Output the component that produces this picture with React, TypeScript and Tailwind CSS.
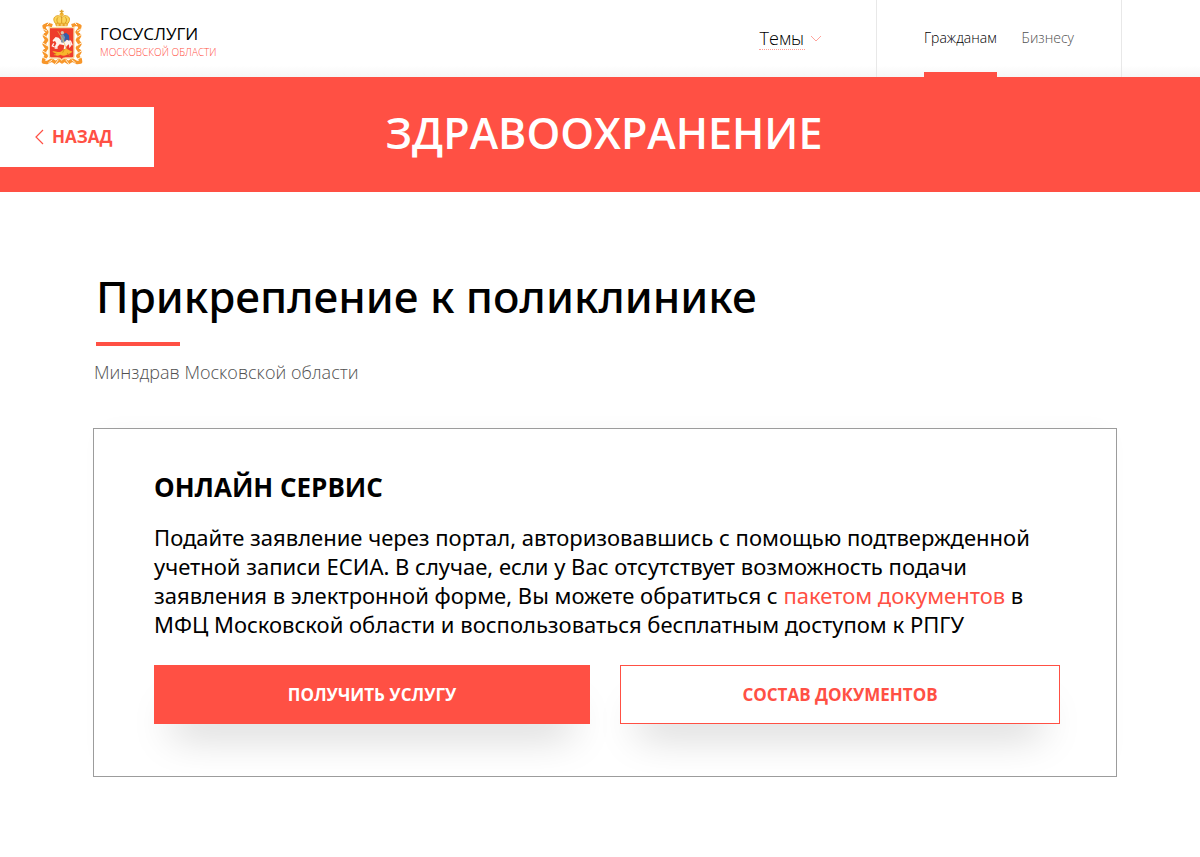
import React from "react";

function Emblem() {
  return (
    <svg viewBox="0 0 126 168" className="h-14 w-[42px] shrink-0" aria-hidden="true">
      <g fill="none" stroke="#f7962a" strokeWidth="10" strokeLinejoin="round">
        <path d="M34 50L20 46 9 51l2 9 7 9-8 12 7 12-8 12 8 12-8 12 7 12-8 10-1 8 11 2 14-8 12 8 12-8 7 6 7-6 12 8 12-8 14 8 11-2-1-8-8-10 7-12-8-12 8-12-8-12 7-12-8-12 7-9 2-9-11-5-14 4" />
      </g>
      <g fill="none" stroke="#fff3dc" strokeWidth="3">
        <path d="M2 58l16 8M4 76l16 10M2 100l16 10M2 124l16 10M3 144l14 6M124 58l-16 8M122 76l-16 10M124 100l-16 10M124 124l-16 10M123 144l-14 6M22 162l12-10M42 166l10-14M74 152l10 14M92 152l12 10M18 48l8-8M108 48l-8-8" />
      </g>
      <path d="M25 56h74v86q0 5-6 5H74q-8 0-12 6-4-6-12-6H31q-6 0-6-5z" fill="#ee3c2b" stroke="#fbd9a0" strokeWidth="4" />
      <path d="M42 43h40l-3 9H45z" fill="#e9a321" />
      <path d="M43 43c-9-12-4-23 9-23 5 0 8 3 10 7 2-4 5-7 10-7 13 0 18 11 9 23z" fill="#fbd45a" stroke="#e5a72a" strokeWidth="3" />
      <path d="M62 20v22M51 25c-5 5-4 12 0 17M73 25c5 5 4 12 0 17" fill="none" stroke="#d99a20" strokeWidth="3" />
      <circle cx="62" cy="16" r="6" fill="#f3b531" />
      <path d="M62 2v13M56 7h12" stroke="#dfa32c" strokeWidth="4" />
      <path d="M47 48h6M59 48h6M71 48h6" stroke="#fff0b4" strokeWidth="3" />
      <path d="M35 94l9-10 9 2 8 9 20-2c7 1 9 9 9 18l-5 7-1-12-7 5-4 10-5-1 2-11-14-3-9 10-6-2 5-11-4-7-6 2z" fill="#fff2ed" />
      <path d="M38 103l-4 8 7 3M50 117h-9M85 94c8 4 5 12 9 15" fill="none" stroke="#fff2ed" strokeWidth="4" />
      <path d="M63 77l12-6 9 8 1 17-8-5-5 7-10-2z" fill="#355ea7" />
      <path d="M59 78l8-2 5 9-4 17-8-2z" fill="#8595ac" />
      <circle cx="64" cy="71" r="5" fill="#d9c4ad" />
      <path d="M50 66l15 24 15 39" fill="none" stroke="#e7bd50" strokeWidth="2" />
      <path d="M34 128c8-4 15 3 22 1 10-3 10-11 20-9 10 1 12 10 18 5-1 8-8 7-13 11-9 6-17 4-23 1-7 5-15 3-20-1l8-2z" fill="#f8b52c" />
      <path d="M46 133l-7 6M65 131l5-10M78 132l9 8" stroke="#d98b19" strokeWidth="3" />
    </svg>
  );
}

export default function App() {
  return (
    <div className="min-h-screen bg-white font-['Open_Sans',sans-serif] text-black">
      <header className="flex h-[77px] items-stretch bg-linear-to-b from-white from-85% to-[#f6f6f6] pr-[78px]">
        <a href="#home" className="flex items-center gap-[17px] pb-1 pl-[41px]">
          <Emblem />
          <span className="flex flex-col pt-[11px]">
            <span className="text-[17px] leading-5">ГОСУСЛУГИ</span>
            <span className="text-[10px] leading-4 font-light text-[#ff5044]">МОСКОВСКОЙ ОБЛАСТИ</span>
          </span>
        </a>
        <div className="ml-auto flex items-center pr-[54px]">
          <button type="button" className="flex items-center gap-[5px]">
            <span className="border-b border-dotted border-[#ff9f98] px-px text-lg leading-[22px] font-light">Темы</span>
            <svg viewBox="0 0 12 8" className="h-2 w-3" fill="none" stroke="#ffa39c" aria-hidden="true">
              <path d="M1 1l5 5 5-5" />
            </svg>
          </button>
        </div>
        <nav className="flex gap-[25px] border-x border-[#e8e8e8] pr-[47px] pl-[47px] text-sm font-light">
          <a href="#citizens" className="flex items-center border-b-5 border-[#ff5044] pt-[3px]">Гражданам</a>
          <a href="#business" className="flex items-center border-b-5 border-transparent pt-[3px] text-[#505050]">Бизнесу</a>
        </nav>
      </header>

      <section className="grid h-[115px] grid-cols-[1fr_auto_1fr] items-center bg-[#ff5044]">
        <a href="#back" className="mt-1 flex h-[60px] w-[154px] items-center gap-2 bg-white pl-[35px] text-[17px] font-bold text-[#ff5044]">
          <svg viewBox="0 0 9 16" className="h-4 w-[9px]" fill="none" stroke="currentColor" strokeWidth="1.2" aria-hidden="true">
            <path d="M8 1L1 8l7 7" />
          </svg>
          НАЗАД
        </a>
        <p className="pb-1 pl-2 text-[43px] leading-[60px] font-semibold text-white">ЗДРАВООХРАНЕНИЕ</p>
      </section>

      <main className="pt-[74px] pr-[83px] pb-20 pl-[93px]">
        <h1 className="pl-[3px] font-['Noto_Sans',sans-serif] text-[44px] leading-[60px] font-medium">Прикрепление к поликлинике</h1>
        <div className="mt-4 ml-[3px] h-1 w-[84px] bg-[#ff5044]" />
        <p className="mt-[10px] pl-px text-lg leading-8 font-light text-[#505050]">Минздрав Московской области</p>

        <section className="mt-10 border border-[#9c9c9c] bg-white pt-10 pr-[56px] pb-[52px] pl-[60px] shadow-[0_-6px_24px_-10px_rgba(0,0,0,0.04)]">
          <h2 className="text-[26px] leading-9 font-bold">ОНЛАЙН СЕРВИС</h2>
          <p className="mt-[18px] font-['Noto_Sans',sans-serif] text-[22px] leading-[29px]">
            Подайте заявление через портал, авторизовавшись с помощью подтвержденной учетной записи ЕСИА. В случае, если у Вас отсутствует возможность подачи заявления в электронной форме, Вы можете обратиться с{" "}
            <a href="#documents" className="text-[#ff5044]">пакетом документов</a> в МФЦ Московской области и воспользоваться бесплатным доступом к РПГУ
          </p>
          <div className="mt-[26px] grid grid-cols-[436fr_440fr] gap-[30px]">
            <button type="button" className="h-[59px] bg-[#ff5044] text-[17px] font-bold text-white shadow-[0_28px_40px_-18px_rgba(0,0,0,0.22)]">ПОЛУЧИТЬ УСЛУГУ</button>
            <button type="button" className="h-[59px] border border-[#ff5044] bg-white text-[17px] font-bold text-[#ff5044] shadow-[0_28px_40px_-18px_rgba(0,0,0,0.22)]">СОСТАВ ДОКУМЕНТОВ</button>
          </div>
        </section>
      </main>
    </div>
  );
}
